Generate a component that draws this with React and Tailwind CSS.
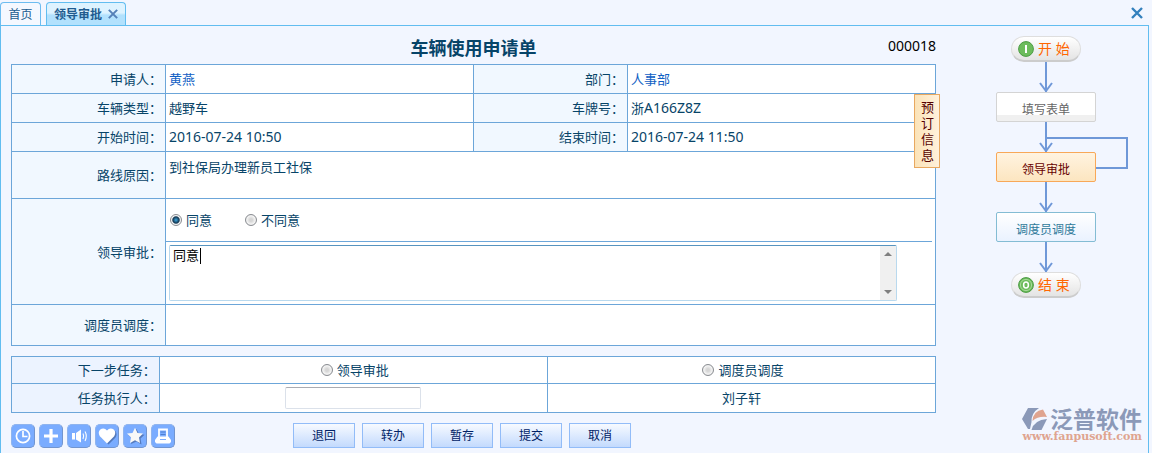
import React from "react";

const fields = [
  [
    { label: "申请人：", value: "黄燕", link: true },
    { label: "部门：", value: "人事部", link: true },
  ],
  [
    { label: "车辆类型：", value: "越野车" },
    { label: "车牌号：", value: "浙", code: "A166Z8Z" },
  ],
  [
    { label: "开始时间：", code: "2016-07-24 10:50" },
    { label: "结束时间：", code: "2016-07-24 11:50" },
  ],
];

const actions = ["退回", "转办", "暂存", "提交", "取消"];

const tools = [
  {
    name: "clock",
    icon: (
      <g fill="none" stroke="#fff" strokeWidth="1.7">
        <circle cx="12" cy="12" r="6.6" />
        <path d="M12 7V12.5H16.5" />
      </g>
    ),
  },
  {
    name: "add",
    icon: <path d="M12 5V19M5 12H19" stroke="#fff" strokeWidth="3.2" />,
  },
  {
    name: "sound",
    icon: (
      <g>
        <path d="M5 9H8V15.5H5ZM9 9L14 5.5V18.5L9 15.5Z" fill="#fff" />
        <path
          d="M16 9.500Q17.300 12 16 15M18 7.500Q20.600 12 18 17"
          fill="none"
          stroke="#fff"
          strokeWidth="1.1"
        />
      </g>
    ),
  },
  {
    name: "favorite",
    icon: (
      <g>
        <path
          d="M13.500 20.500L6 13.500Q4 10 6 7.300Q10 4.500 13 8.500Q16.500 4.500 20.500 7.300Q22.500 10.500 20.500 13.500Z"
          fill="#5479bb"
        />
        <path
          d="M12 19.500L4.800 12.200Q2.600 8.500 5 5.800Q9 3 12 6.500Q15 3 19 5.800Q21.400 8.500 19.200 12.200Z"
          fill="#fff"
        />
      </g>
    ),
  },
  {
    name: "star",
    icon: (
      <g>
        <path
          d="M13.500 5L16 10L21.500 10.800L17.500 14.500L18.500 20.500L13.500 17.500L8 20L9 14.500L5 10.800L10.400 10Z"
          fill="#5479bb"
        />
        <path
          d="M12 3.700L14.500 8.900L20 9.600L16 13.500L17 19L12 16.300L7 19L8 13.500L4 9.600L9.500 8.900Z"
          fill="#f8f8f8"
        />
      </g>
    ),
  },
  {
    name: "print",
    icon: (
      <g>
        <path d="M4 16L6.500 12.500H17.500L20 16V18L18.500 19.500H5.500L4 18Z" fill="#fff" />
        <path d="M8 5.500H16V13.500H8Z" fill="#7aacff" stroke="#fff" strokeWidth="1.800" />
        <path d="M9.500 8H14.500M9.500 10.500H14.500" stroke="#4f7fd0" />
        <path d="M9 15.500H15" stroke="#7aacff" />
      </g>
    ),
  },
];

const labelCell =
  "border border-[#6ca6d9] bg-[#f1f8ff] py-0 pr-[3px] text-right font-normal";
const valueCell = "border border-[#6ca6d9] bg-white px-[3px] py-0";
const taskLabel =
  "border border-[#6ca6d9] bg-[#ecf3ff] py-0 pr-[3px] text-right font-normal";
const taskCell = "border border-[#6ca6d9] bg-white p-0 text-center";

function Cross({ className, width }) {
  return (
    <svg viewBox="0 0 12 12" className={className} aria-hidden="true">
      <path d="M1 1L11 11M11 1L1 11" stroke="currentColor" strokeWidth={width} />
    </svg>
  );
}

function Radio({ label, ...props }) {
  return (
    <label className="inline-flex items-center gap-1">
      <input
        type="radio"
        className="ml-[3px] h-3 w-3 appearance-none rounded-full border border-[#8a8d92] bg-[radial-gradient(circle,#d6d6d6_20%,#f4f4f4_60%,#c8c8c8_100%)] checked:bg-[radial-gradient(circle,#3fa9e0_0%,#12344f_45%,#f4f4f4_60%)]"
        {...props}
      />
      {label}
    </label>
  );
}

function Arrow() {
  return (
    <svg viewBox="0 0 14 30" className="block h-[30px] w-3.5" aria-hidden="true">
      <path d="M7 0V30M1 21L7 29L13 21" fill="none" stroke="#6f98d8" strokeWidth="2" />
    </svg>
  );
}

function Pill({ text, children }) {
  return (
    <div className="flex h-[26px] w-[70px] items-center gap-1 rounded-full border border-[#dedede] border-b-2 border-b-[#cccccc] bg-linear-to-b from-white to-[#e4e4e4] pl-1.5 text-sm leading-none whitespace-nowrap text-[#ff6600]">
      <svg viewBox="0 0 16 16" className="h-4 w-4 shrink-0" aria-hidden="true">
        <circle cx="8" cy="8" r="7.400" fill="#6cbc5c" stroke="#4c9c44" />
        {children}
      </svg>
      {text}
    </div>
  );
}

function Tabs() {
  return (
    <nav className="flex h-[25px] items-end gap-[5px] text-xs text-[#215b8f]">
      <button className="h-[23px] w-[41px] rounded-t border border-b-0 border-[#6cbcf0] bg-[#f4f8ff] pt-0.5">
        首页
      </button>
      <div className="flex h-[23px] w-20 items-center justify-center gap-1.5 rounded-t border border-b-0 border-[#62bdf0] bg-linear-to-b from-[#def3ff] from-45% to-[#b2e1fd] to-55%">
        <button className="pt-0.5 font-bold">领导审批</button>
        <button aria-label="关闭标签">
          <Cross className="h-2.5 w-2.5 text-[#5580b8]" width="2.400" />
        </button>
      </div>
      <button aria-label="关闭" className="mr-1.5 mb-1.5 ml-auto">
        <Cross className="h-3 w-3 text-[#3380bd]" width="2.400" />
      </button>
    </nav>
  );
}

function RequestTable() {
  return (
    <table className="w-full table-fixed border-collapse">
      <colgroup>
        <col className="w-1/6" />
        <col className="w-1/3" />
        <col className="w-1/6" />
        <col className="w-1/3" />
      </colgroup>
      <tbody>
        {fields.map((row, i) => (
          <tr key={i} className="h-[29px]">
            {row.map((field) => (
              <React.Fragment key={field.label}>
                <th className={labelCell}>{field.label}</th>
                <td className={valueCell}>
                  {field.link ? (
                    <a href="#" className="text-[#1160c4]">
                      {field.value}
                    </a>
                  ) : (
                    field.value
                  )}
                  {field.code && <span className="text-sm leading-4">{field.code}</span>}
                </td>
              </React.Fragment>
            ))}
          </tr>
        ))}
        <tr className="h-[47px]">
          <th className={labelCell}>路线原因：</th>
          <td colSpan={3} className={`${valueCell} pt-[7px] align-top`}>
            到社保局办理新员工社保
          </td>
        </tr>
        <tr className="h-[106px]">
          <th className={labelCell}>
            <label htmlFor="opinion">领导审批：</label>
          </th>
          <td colSpan={3} className="border border-[#6ca6d9] bg-white py-0 pr-[3px] pl-0 align-top">
            <div className="flex h-[43px] items-center gap-[30px] border-b border-[#6ca6d9] pl-px">
              <Radio label="同意" name="result" defaultChecked />
              <Radio label="不同意" name="result" />
            </div>
            <div className="relative mt-[3px] ml-[3px] flex h-14 w-[95%] rounded-xs border border-[#b9d9ee] border-t-[#5794bf]">
              <textarea
                id="opinion"
                defaultValue="同意"
                className="h-full flex-1 resize-none overflow-hidden bg-white px-[3px] py-px leading-4 text-black outline-none"
              />
              <span className="absolute top-0.5 left-[30px] h-4 w-px bg-black" />
              <div className="flex w-4 flex-col items-center justify-between bg-[#f0f0f0] py-1.5">
                <svg viewBox="0 0 8 4" className="h-1 w-2" aria-hidden="true">
                  <path d="M0 4L4 0L8 4Z" fill="#808080" />
                </svg>
                <svg viewBox="0 0 8 4" className="h-1 w-2" aria-hidden="true">
                  <path d="M0 0L4 4L8 0Z" fill="#808080" />
                </svg>
              </div>
            </div>
          </td>
        </tr>
        <tr className="h-[41px]">
          <th className={labelCell}>调度员调度：</th>
          <td colSpan={3} className={valueCell}></td>
        </tr>
      </tbody>
    </table>
  );
}

function TaskTable() {
  return (
    <table className="mt-2.5 w-full table-fixed border-collapse">
      <colgroup>
        <col className="w-[16%]" />
        <col className="w-[42%]" />
        <col className="w-[42%]" />
      </colgroup>
      <tbody>
        <tr className="h-[27px]">
          <th className={taskLabel}>下一步任务：</th>
          <td className={taskCell}>
            <Radio label="领导审批" name="next" />
          </td>
          <td className={taskCell}>
            <Radio label="调度员调度" name="next" />
          </td>
        </tr>
        <tr className="h-[29px]">
          <th className={taskLabel}>
            <label htmlFor="executor">任务执行人：</label>
          </th>
          <td className={taskCell}>
            <input
              id="executor"
              type="text"
              className="mx-auto block h-[22px] w-[136px] rounded-xs border border-[#dbe1ea] border-t-[#a9abb2] bg-white px-1"
            />
          </td>
          <td className={taskCell}>刘子轩</td>
        </tr>
      </tbody>
    </table>
  );
}

function Toolbar() {
  return (
    <div className="mt-2.5 flex items-center">
      <div className="flex gap-1">
        {tools.map((tool) => (
          <button
            key={tool.name}
            type="button"
            aria-label={tool.name}
            className="h-6 w-6 rounded-[5px] border border-[#8fb4ee] border-r-[#7295cf] border-b-[#7295cf] bg-[#7aacff]"
          >
            <svg viewBox="1 1 22 22" className="block h-full w-full">
              {tool.icon}
            </svg>
          </button>
        ))}
      </div>
      <div className="ml-[118px] flex gap-[7px]">
        {actions.map((action) => (
          <button
            key={action}
            type="button"
            className="h-[25px] w-[62px] border border-[#92bcf8] bg-linear-to-b from-[#f7faff] to-[#c3dafd] text-xs text-[#002266]"
          >
            {action}
          </button>
        ))}
      </div>
    </div>
  );
}

function Workflow() {
  return (
    <div className="ml-[60px] flex w-[100px] flex-col items-center text-xs">
      <Pill text="开 始">
        <path d="M8 4V12" stroke="#fff" strokeWidth="2" />
      </Pill>
      <Arrow />
      <div className="flex h-[30px] w-full items-center justify-center rounded-xs border border-[#d4d4d4] bg-linear-to-b from-white from-80% to-[#f0f0f0] to-80% pt-1.5 text-[#666]">
        填写表单
      </div>
      <div className="relative flex w-full flex-col items-center">
        <Arrow />
        <div className="flex h-[30px] w-full items-center justify-center rounded-xs border border-[#f8a858] bg-linear-to-b from-[#fff3e0] to-[#fce5c0] pt-1.5 text-[#660000]">
          领导审批
        </div>
        {/* loop back to the approval step */}
        <svg
          viewBox="0 0 84 48"
          className="absolute top-0 left-[50px] h-12 w-[84px]"
          aria-hidden="true"
        >
          <path d="M0 16H81V46H50" fill="none" stroke="#6f98d8" strokeWidth="2" />
        </svg>
      </div>
      <Arrow />
      <div className="flex h-[30px] w-full items-center justify-center rounded-xs border border-[#83bcd4] bg-linear-to-b from-white to-[#eaf2ff] pt-1.5 text-[#2f7a9b]">
        调度员调度
      </div>
      <Arrow />
      <Pill text="结 束">
        <circle cx="8" cy="8" r="5.600" fill="none" stroke="#b5dfa8" strokeWidth="0.800" />
        <ellipse cx="8" cy="8" rx="2.400" ry="3" fill="none" stroke="#fff" strokeWidth="1.500" />
      </Pill>
    </div>
  );
}

function Logo() {
  return (
    <div className="mr-1.5 mb-2.5 flex flex-col items-end">
      <div className="flex items-center gap-0.5 text-[23px] leading-6 font-bold text-[#8b99b8]">
        <svg viewBox="0 0 26 24" className="h-6 w-[26px]" aria-hidden="true">
          <path d="M6 1H17Q9 6 9.500 15L8 22H6L0 12Z" fill="#8b99b8" />
          <path d="M10.500 14Q11 4 21 2.500L25 10Q16 9 10.500 14Z" fill="#dfa48f" />
          <path d="M9.500 23Q12 13 25 12L19.500 23Z" fill="#8b99b8" />
        </svg>
        泛普软件
      </div>
      <div className="font-['DejaVu_Serif',serif] text-[11px] leading-3 font-bold text-[#dfa48f]">
        www.fanpusoft.com
      </div>
    </div>
  );
}

export default function App() {
  return (
    <div className="flex min-h-screen flex-col bg-[#f2f6ff] pr-[3px] font-['Noto_Sans','Noto_Sans_CJK_SC',sans-serif] text-[13px] leading-4 text-[#074468]">
      <Tabs />
      <main className="flex flex-1 border border-b-0 border-[#62bdf0]">
        <form className="relative min-w-0 flex-1 pl-2.5">
          <header className="grid h-[38px] grid-cols-[1fr_auto_1fr] items-center pt-1.5">
            <h1 className="col-start-2 text-lg font-bold">车辆使用申请单</h1>
            <span className="pb-1 text-right text-sm text-black">000018</span>
          </header>
          <RequestTable />
          <button
            type="button"
            className="absolute top-[68px] -right-1 w-[26px] border border-[#e8a860] bg-linear-to-r from-[#fbe3b8] to-[#fff1dc] px-1.5 py-1 text-[13px] leading-4 text-[#550000]"
          >
            预订信息
          </button>
          <TaskTable />
          <Toolbar />
        </form>
        <aside className="flex w-[212px] flex-col justify-between pt-2.5">
          <Workflow />
          <Logo />
        </aside>
      </main>
    </div>
  );
}
